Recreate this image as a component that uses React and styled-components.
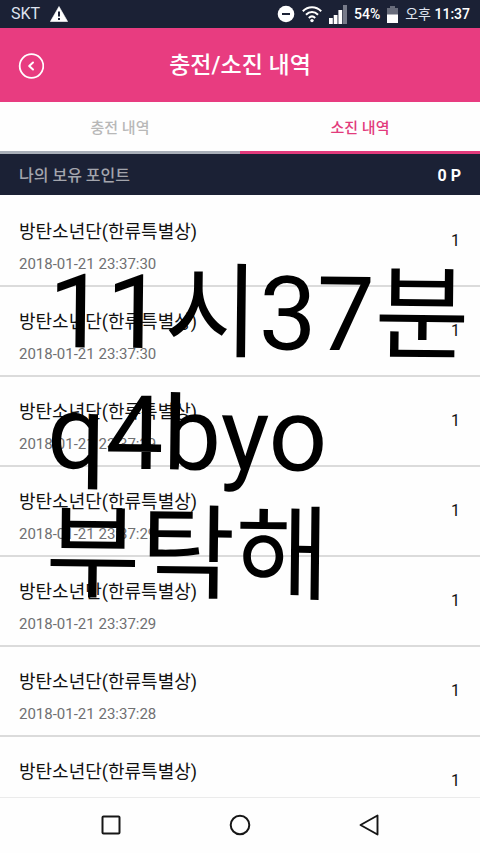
import React from "react";
import styled, { createGlobalStyle } from "styled-components";

const GlobalStyle = createGlobalStyle`
  * { box-sizing: border-box; }
  body {
    margin: 0;
    background: #fefefe;
    color: #111;
    font-family: Roboto, "Noto Sans CJK KR", sans-serif;
  }
  button { font: inherit; border: 0; padding: 0; background: none; cursor: pointer; }
`;

const Screen = styled.div`
  position: relative;
  display: flex;
  flex-direction: column;
  height: 100vh;
  overflow: hidden;
`;

const StatusBar = styled.div`
  display: flex;
  justify-content: space-between;
  align-items: center;
  flex: none;
  height: 28px;
  padding: 0 10px 0 11px;
  background: #1b2135;
  color: #fff;
`;

const StatusGroup = styled.div`
  display: flex;
  align-items: center;
  gap: ${(p) => p.$gap}px;
`;

const StatusText = styled.span`
  font-size: ${(p) => p.$size}px;
  line-height: 20px;
  font-weight: ${(p) => (p.$medium ? 500 : 400)};
  color: ${(p) => (p.$medium ? "#fff" : "#dfe3ef")};
`;

const Header = styled.header`
  display: grid;
  grid-template-columns: 26px 1fr 26px;
  align-items: center;
  flex: none;
  height: 74px;
  padding: 2px 18px 0;
  background: #e83c80;
  color: #fff;
`;

const BackButton = styled.button`
  display: flex;
  color: #fff;
`;

const Title = styled.h1`
  margin: 0;
  text-align: center;
  font-size: 23px;
  line-height: 32px;
  font-weight: 500;
`;

const Tabs = styled.div`
  display: flex;
  flex: none;
`;

const Tab = styled.button`
  flex: 1;
  height: 52px;
  padding-top: 2px;
  font-size: 15px;
  line-height: 20px;
  font-weight: 500;
  color: ${(p) => (p.$active ? "#e23b7c" : "#b8b8b8")};
  border-bottom: ${(p) => (p.$active ? "3px solid #e23b7c" : "3px solid #a9afb8")};
`;

const PointBar = styled.div`
  display: flex;
  justify-content: space-between;
  align-items: center;
  flex: none;
  height: 41px;
  padding: 2px 19px 0;
  background: #1b2135;
`;

const PointLabel = styled.span`
  font-size: 16px;
  line-height: 24px;
  font-weight: 500;
  color: #a3a5ad;
`;

const PointValue = styled.span`
  font-size: 16px;
  line-height: 24px;
  font-weight: 700;
  color: #fff;
`;

const List = styled.ul`
  flex: 1;
  min-height: 0;
  margin: 0;
  padding: 2px 0 0;
  overflow: hidden;
  list-style: none;
`;

const Row = styled.li`
  display: flex;
  justify-content: space-between;
  align-items: center;
  height: 90px;
  padding: 0 20px 0 19px;
  border-bottom: 2px solid #dbdbdb;
`;

const RowText = styled.div`
  display: flex;
  flex-direction: column;
  gap: 8px;
  padding-top: 12px;
`;

const RowName = styled.span`
  font-size: 18px;
  line-height: 26px;
`;

const RowDate = styled.time`
  font-size: 15px;
  line-height: 22px;
  color: #6f7072;
`;

const RowCount = styled.span`
  font-size: 16px;
  line-height: 22px;
`;

const NavBar = styled.nav`
  display: flex;
  justify-content: center;
  align-items: center;
  gap: 105px;
  flex: none;
  height: 56px;
  padding-bottom: 2px;
  border-top: 1px solid #ebebeb;
  background: #fefefe;
`;

const NavButton = styled.button`
  display: flex;
  color: #161616;
`;

const Caption = styled.p`
  position: absolute;
  left: 47px;
  top: 251px;
  margin: 0;
  white-space: pre;
  font-size: 103px;
  line-height: 121px;
  color: #000;
  transform: rotate(0.6deg);
  transform-origin: left center;
  pointer-events: none;
`;

const rows = [
  "2018-01-21 23:37:30",
  "2018-01-21 23:37:30",
  "2018-01-21 23:37:29",
  "2018-01-21 23:37:29",
  "2018-01-21 23:37:29",
  "2018-01-21 23:37:28",
  "2018-01-21 23:37:28",
];

const Warning = () => (
  <svg width="18" height="16" viewBox="0 0 18 16">
    <path d="M9 .5 17.6 15.5H.4Z" fill="#fff" stroke="#fff" strokeWidth=".6" strokeLinejoin="round" />
    <path d="M8 5.5h2v5H8zM8 12h2v2H8z" fill="#1b2135" />
  </svg>
);

const Disturb = () => (
  <svg width="18" height="18" viewBox="0 0 18 18">
    <circle cx="9" cy="9" r="8.3" fill="#fff" />
    <path d="M5 8h8v2H5z" fill="#1b2135" />
  </svg>
);

const Wifi = () => (
  <svg width="20" height="18" viewBox="0 0 20 18" fill="none" stroke="#fff" strokeWidth="2">
    <path d="M.8 6.2C6 .8 14 .8 19.2 6.2M4 9.7c3.5-3.5 8.5-3.5 12 0M6.8 12.9c2-1.9 4.4-1.9 6.4 0" />
    <circle cx="10" cy="15.6" r="1.7" fill="#fff" stroke="none" />
  </svg>
);

const Signal = () => (
  <svg width="18" height="19" viewBox="0 0 18 19" fill="#fff">
    <path d="M0 13h3.8v6H0zM4.700 10h3.8v9H4.700zM9.400 5h3.8v14H9.400z" />
    <path d="M14 0h4v19h-4z" fill="#777b8a" />
  </svg>
);

const Battery = () => (
  <svg width="11" height="17" viewBox="0 0 11 17">
    <path d="M3 0h5v2h3v7H0V2h3z" fill="#686c7b" />
    <path d="M0 8.5h11V17H0z" fill="#fff" />
  </svg>
);

export default function App() {
  return (
    <>
      <GlobalStyle />
      <Screen>
        <StatusBar>
          <StatusGroup $gap={10}>
            <StatusText $size={16}>SKT</StatusText>
            <Warning />
          </StatusGroup>
          <StatusGroup $gap={7}>
            <Disturb />
            <Wifi />
            <Signal />
            <StatusText $size={14} $medium>54%</StatusText>
            <Battery />
            <StatusText $size={14} $medium>
              <StatusText $size={14}>오후</StatusText> 11:37
            </StatusText>
          </StatusGroup>
        </StatusBar>
        <Header>
          <BackButton aria-label="뒤로">
            <svg width="26" height="26" viewBox="0 0 26 26" fill="none" stroke="currentColor" strokeLinecap="round" strokeLinejoin="round">
              <circle cx="13.5" cy="13" r="11.8" strokeWidth="1.8" />
              <path d="M15 9.5 11.2 13l3.8 3.5" strokeWidth="2" />
            </svg>
          </BackButton>
          <Title>충전/소진 내역</Title>
        </Header>
        <Tabs role="tablist">
          <Tab role="tab" aria-selected="false">충전 내역</Tab>
          <Tab role="tab" aria-selected="true" $active>소진 내역</Tab>
        </Tabs>
        <PointBar>
          <PointLabel>나의 보유 포인트</PointLabel>
          <PointValue>0 P</PointValue>
        </PointBar>
        <List>
          {rows.map((date, i) => (
            <Row key={i}>
              <RowText>
                <RowName>방탄소년단(한류특별상)</RowName>
                <RowDate>{date}</RowDate>
              </RowText>
              <RowCount>1</RowCount>
            </Row>
          ))}
        </List>
        <NavBar>
          <NavButton aria-label="최근 앱">
            <svg width="24" height="24" viewBox="0 0 24 24" fill="none" stroke="currentColor" strokeWidth="2">
              <rect x="3.5" y="3.5" width="17" height="17" rx="1" />
            </svg>
          </NavButton>
          <NavButton aria-label="홈">
            <svg width="24" height="24" viewBox="0 0 24 24" fill="none" stroke="currentColor" strokeWidth="2">
              <circle cx="12" cy="12" r="9.3" />
            </svg>
          </NavButton>
          <NavButton aria-label="이전">
            <svg width="24" height="24" viewBox="0 0 24 24" fill="none" stroke="currentColor" strokeWidth="1.9" strokeLinejoin="round">
              <path d="M20.5 2.5v19L3.5 12Z" />
            </svg>
          </NavButton>
        </NavBar>
        <Caption>{"11시37분\nq4byo\n부탁해"}</Caption>
      </Screen>
    </>
  );
}
